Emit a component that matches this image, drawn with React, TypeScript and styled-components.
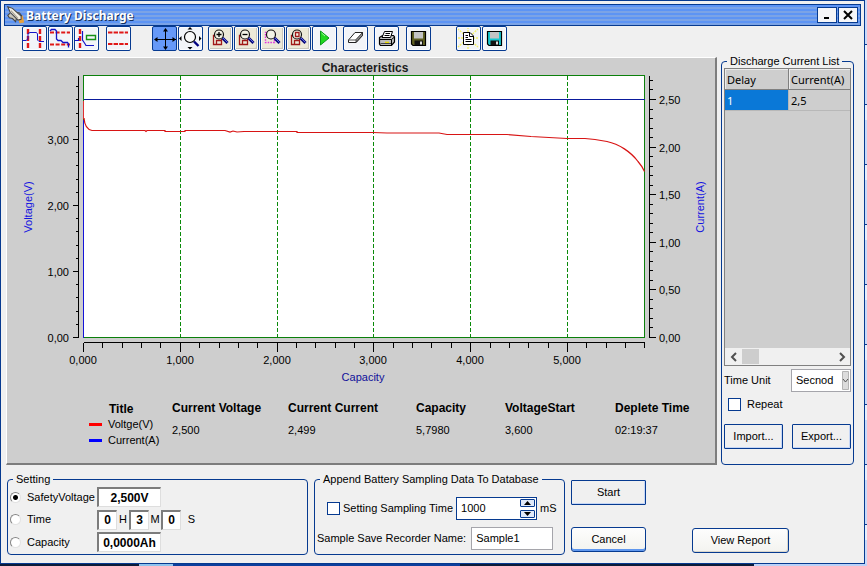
import React, { useState } from "react";
import styled, { createGlobalStyle, css } from "styled-components";

const NAVY = "#063a90";
const FACE = "#f0f0f0";
const PANEL = "#cecece";

const GlobalStyle = createGlobalStyle`
  * { box-sizing: border-box; }
  html, body { margin: 0; padding: 0; }
  body, button, input, select {
    font-family: "Liberation Sans", Arial, sans-serif;
    font-size: 11px;
    line-height: 13px;
    color: #000;
  }
`;

const Desktop = styled.div`
  display: flex;
  min-height: 100vh;
  padding: 0 2px 2px 0;
  background:
    linear-gradient(90deg, #0b1c3a 0 16%, #8fc4ee 16% 20%, #0c3f9c 20% 53%, #0b1c3a 53% 87%, #bcd2f8 87%) bottom / 100% 2px no-repeat,
    repeating-linear-gradient(180deg, #c9dafa 0 44px, #0a3a8c 44px 45px, #e6effd 45px 60px);
`;

const Window = styled.main`
  flex: 1;
  min-width: 0;
  display: flex;
  flex-direction: column;
  padding: 3px 3px 0;
  border: 1px solid ${NAVY};
  background: ${FACE};
`;

const TitleBar = styled.header`
  display: flex;
  align-items: center;
  height: 22px;
  padding: 0 2px;
  border: 1px solid ${NAVY};
  background: repeating-linear-gradient(180deg, #5d94f4 0 2px, #7ba3e6 2px 4px);
`;

const Title = styled.h1`
  flex: 1;
  margin: 0 0 0 1px;
  padding-top: 1px;
  font: bold 12px/18px "Noto Sans", sans-serif;
  color: #fff;
  text-shadow: 1px 1px 0 #12305f;
`;

const CaptionButton = styled.button`
  display: grid;
  place-items: center;
  width: 20px;
  height: 16px;
  margin-left: 1px;
  padding: 0;
  border: 1px solid ${NAVY};
  background: #f6f6f8;
`;

const Toolbar = styled.div`
  display: flex;
  height: 29px;
  padding-left: 18px;
`;

const ToolGroup = styled.div<{ $gap?: number }>`
  display: flex;
  gap: 1px;
  margin-left: ${(p) => p.$gap ?? 0}px;
`;

const ToolButton = styled.button<{ $active?: boolean; $raised?: boolean }>`
  width: 25px;
  height: 25px;
  padding: 0;
  border: 1px solid ${NAVY};
  border-radius: 2px;
  background: ${(p) => (p.$active ? "#6699f8" : p.$raised ? "#ece9d8" : "#f2f4f8")};
  box-shadow: inset 0 0 0 1px ${(p) => (p.$active ? "#6699f8" : "#fbfcff")}
    ${(p) => p.$raised && css`, inset -2px -2px 0 #c9c6bb`};
  svg { display: block; }
`;

const MainRow = styled.div`
  display: flex;
  gap: 4px;
  padding: 0 7px 0 2px;
`;

const ChartPanel = styled.section`
  flex: 1;
  min-width: 0;
  margin-top: 2px;
  border: 1px solid #fff;
  border-right: 2px solid #7d7d7d;
  border-bottom: 2px solid #7d7d7d;
  background: ${PANEL};
`;

const Chart = styled.svg`
  display: block;
  width: 100%;
  height: auto;
  font-family: "Liberation Sans", Arial, sans-serif;
  font-size: 11px;
`;

const Readings = styled.div`
  display: grid;
  grid-template-columns: 83fr 116fr 128fr 89fr 110fr 100fr;
  height: 73px;
  padding: 11px 0 0 82px;
`;

const ReadingTitle = styled.div`
  font-size: 12px;
  font-weight: bold;
  line-height: 14px;
  white-space: nowrap;
`;

const ReadingValue = styled.div`
  margin-top: 9px;
`;

const LegendList = styled.div`
  display: flex;
  flex-direction: column;
  ${ReadingTitle} { padding: 1px 0 0 20px; }
`;

const LegendItem = styled.div<{ $color: string }>`
  display: flex;
  align-items: center;
  gap: 6px;
  height: 16px;
  white-space: nowrap;
  &::before {
    content: "";
    width: 13px;
    height: 3px;
    background: ${(p) => p.$color};
  }
`;

const Group = styled.fieldset<{ $width?: number }>`
  flex: ${(p) => (p.$width ? `0 0 ${p.$width}px` : "1")};
  min-width: 0;
  margin: 0;
  padding: 0;
  border: 1px solid ${NAVY};
  border-radius: 4px;
`;

const GroupTitle = styled.legend`
  margin-left: 5px;
  padding: 0 3px;
  white-space: nowrap;
`;

const ListBox = styled.div`
  display: flex;
  flex-direction: column;
  height: 298px;
  margin: 0 2px;
  border: 1px solid #808080;
  background: ${PANEL};
`;

const ListTable = styled.table`
  width: 100%;
  border-collapse: separate;
  border-spacing: 0;
  table-layout: fixed;
  font: 11px/19px "Noto Sans", sans-serif;
  th, td {
    height: 21px;
    padding: 0 2px;
    text-align: left;
    font-weight: normal;
    border-right: 1px solid #808080;
    border-bottom: 1px solid #808080;
  }
  th { box-shadow: inset 1px 1px 0 #ececec; }
  th:first-child { width: 64px; }
  th:last-child, td:last-child { border-right: 0; }
  td { border-color: #b8b8b8; }
`;

const SelectedCell = styled.td`
  background: #0a78d7;
  color: #fff;
`;

const ScrollBar = styled.div`
  display: flex;
  align-items: center;
  height: 17px;
  margin-top: auto;
  background: ${FACE};
`;

const ScrollButton = styled.button`
  display: grid;
  place-items: center;
  width: 17px;
  height: 17px;
  padding: 0;
  border: 0;
  background: transparent;
  &:last-child { margin-left: auto; }
`;

const ScrollThumb = styled.div`
  width: 17px;
  height: 15px;
  background: #cdcdcd;
`;

const Row = styled.div<{ $height: number; $pad?: number; $gap?: number }>`
  display: flex;
  align-items: center;
  gap: ${(p) => p.$gap ?? 0}px;
  height: ${(p) => p.$height}px;
  padding: 0 ${(p) => p.$pad ?? 2}px;
  white-space: nowrap;
`;

const Spread = styled(Row)`
  justify-content: space-between;
`;

const SelectBox = styled.div`
  position: relative;
  width: 60px;
  svg {
    position: absolute;
    top: 2px;
    right: 2px;
    pointer-events: none;
  }
`;

const Select = styled.select`
  width: 100%;
  height: 23px;
  padding: 0 0 0 4px;
  appearance: none;
  border: 1px solid #a5a5ab;
  border-radius: 0;
  background: #fff;
`;

const CheckBox = styled.input.attrs({ type: "checkbox" })`
  appearance: none;
  flex: none;
  width: 13px;
  height: 13px;
  margin: 0;
  border: 1px solid ${NAVY};
  background: #fff;
  &:checked { background: ${NAVY}; box-shadow: inset 0 0 0 2px #fff; }
`;

const Radio = styled.input.attrs({ type: "radio" })`
  appearance: none;
  flex: none;
  width: 11px;
  height: 11px;
  margin: 0;
  border: 1px solid;
  border-color: #858585 #e2e2e2 #e2e2e2 #858585;
  border-radius: 50%;
  background: #fff;
  &:checked { background: radial-gradient(circle, #000 2px, #fff 3px); }
`;

const RadioLabel = styled.label`
  display: flex;
  align-items: center;
  gap: 6px;
  width: 87px;
`;

const SunkenInput = styled.input<{ $width: number }>`
  width: ${(p) => p.$width}px;
  height: 20px;
  padding: 0;
  border: 1px solid;
  border-width: 2px 1px 1px 2px;
  border-color: #7c7c7c #dedede #dedede #7c7c7c;
  background: #fff;
  font-size: 12px;
  font-weight: bold;
  text-align: center;
`;

const Unit = styled.span`
  width: 12px;
  text-align: center;
  &:last-child { width: 14px; text-align: right; }
`;

const PushButton = styled.button<{ $width: number; $look?: "flat" | "soft" | "default" }>`
  width: ${(p) => p.$width}px;
  height: 25px;
  padding: 0;
  border: 1px solid ${NAVY};
  border-radius: ${(p) => (p.$look === "flat" ? 1 : 3)}px;
  background: ${(p) => (p.$look === "flat" ? FACE : "linear-gradient(#fdfdfd, #f3f3ef)")};
  box-shadow: ${(p) =>
    p.$look === "default"
      ? "inset 0 -2px 0 #5f97ee"
      : p.$look === "soft"
        ? "inset -1px -1px 0 #d9d6cc"
        : "inset -1px -1px 0 #c5d6f6"};
`;

const BottomRow = styled.div`
  display: flex;
  align-items: flex-start;
  gap: 6px;
  padding: 8px 72px 0 3px;
  ${Group} { height: 82px; }
`;

const ButtonColumn = styled.div`
  display: flex;
  flex-direction: column;
  justify-content: space-between;
  height: 79px;
  padding-top: 7px;
`;

const ReportSlot = styled.div`
  display: flex;
  align-items: flex-end;
  height: 80px;
  margin-left: 40px;
`;

const Spinner = styled.div`
  display: flex;
  align-items: center;
  width: 81px;
  height: 23px;
  padding-right: 1px;
  border: 1px solid ${NAVY};
  background: #fff;
`;

const SpinnerInput = styled.input`
  flex: 1;
  min-width: 0;
  height: 19px;
  padding: 0 0 0 4px;
  border: 0;
  background: transparent;
`;

const SpinButtons = styled.div`
  display: flex;
  flex-direction: column;
  gap: 3px;
`;

const SpinButton = styled.button`
  display: grid;
  place-items: center;
  width: 15px;
  height: 8px;
  padding: 0;
  border: 1px solid ${NAVY};
  border-radius: 1px;
  background: #dfe9fa;
`;

const TextInput = styled.input`
  width: 82px;
  height: 23px;
  padding: 0 0 0 4px;
  border: 1px solid #a5a5ab;
  background: #fff;
`;

/* ---------- icons ---------- */

const Icon = ({ children, size = 23 }: { children: React.ReactNode; size?: number }) => (
  <svg width={size} height={size} viewBox="0 0 23 23" fill="none" aria-hidden="true">
    {children}
  </svg>
);

const RED = "#e01818";
const BLUE = "#1414c8";

const PulseIcon = () => (
  <Icon>
    <path d="M5 2V22M17 2V22" stroke={RED} strokeWidth="2.4" strokeDasharray="5 2" />
    <path d="M0 13.5H3L5 12V6.5L7 5.5H13.5L14.5 7V13L16 14.5H21" stroke={BLUE} />
  </Icon>
);
const DecayIcon = () => (
  <Icon>
    <path d="M1 5.5H21M1 17.5H21" stroke={RED} strokeWidth="2" strokeDasharray="4 1.6" />
    <path d="M1 4L2.5 2.5H6L7.5 4V12L9 13.5H12L14 15.5H18.5L19.5 17V20.5" stroke={BLUE} strokeWidth="1.3" />
  </Icon>
);
const EdgeIcon = () => (
  <Icon>
    <path d="M5 2V22" stroke={RED} strokeWidth="2.4" strokeDasharray="5 2" />
    <path d="M0 13.5H3.5V11M7.5 4V13L9.5 16L11 18.5H19" stroke={BLUE} strokeWidth="1.2" />
    <path d="M11.5 8.5H20.5V12.5H11.5Z" stroke="#159015" strokeWidth="1.4" />
  </Icon>
);
const BandIcon = () => (
  <Icon>
    <path d="M1 5.5H21M1 17H21" stroke={RED} strokeWidth="1.8" strokeDasharray="4.4 1.2" />
  </Icon>
);
const MoveIcon = () => (
  <Icon>
    <path d="M12.5 2V22M2 12.5H23" stroke="#000" />
    <path d="M12.5 1L15 4.500H10ZM12.500 23L15 19.500H10ZM1 12.500L4.500 10V15ZM23 12.500L19.500 10V15Z" fill="#000" />
  </Icon>
);
const FitIcon = () => (
  <Icon>
    <circle cx="11" cy="10" r="5.5" stroke="#000" strokeWidth="1.2" fill="#f8f8f8" />
    <path d="M15 14.5L19.5 19" stroke="#000080" strokeWidth="2.4" />
    <path d="M11 0L13.500 2.500H8.500ZM11 22.500L13.500 20H8.500ZM0 11.500L2.500 9V14ZM22.500 11.500L20 9V14Z" fill="#000" />
  </Icon>
);
const Lens = ({ children }: { children?: React.ReactNode }) => (
  <>
    <circle cx="10" cy="7.5" r="4.5" fill="#f3f3e6" stroke="#111" strokeWidth="1.2" />
    {children}
    <path d="M13.5 11L18.5 16" stroke="#0a0a78" strokeWidth="3" />
    <path d="M14 11L18.5 15.5" stroke="#5c6ce8" />
  </>
);
const RedSheet = () => (
  <path d="M6 8.5H4.5V17.5H12.5V12M7.5 17V13.5H12.5" stroke="#a01818" strokeWidth="1.3" />
);
const ZoomInIcon = () => (
  <Icon><RedSheet /><Lens><path d="M7.5 7.5H12.5M10 5V10" stroke="#000" strokeWidth="1.3" /></Lens></Icon>
);
const ZoomOutIcon = () => (
  <Icon><RedSheet /><Lens><path d="M7.5 7.5H12.5" stroke="#000" strokeWidth="1.3" /></Lens></Icon>
);
const ZoomAreaIcon = () => (
  <Icon>
    <path d="M4.5 5.5H13.5V15.5H4.5Z" stroke="#e030e0" strokeWidth="1.4" strokeDasharray="1.5 1.2" />
    <Lens />
  </Icon>
);
const ZoomPageIcon = () => (
  <Icon><RedSheet /><Lens><path d="M8.5 5.5H12V9.5H8.5Z" stroke="#a01818" strokeWidth="1.3" /></Lens></Icon>
);
const PlayIcon = () => (
  <Icon>
    <path d="M7.5 4V18L16 11Z" fill="#20d820" stroke="#0a9a1a" />
    <path d="M8.5 6L12 9" stroke="#9dff9d" />
  </Icon>
);
const EraserIcon = () => (
  <Icon>
    <path d="M4.5 13L11 5.5H18.5V8.5L12 15.5H4.5Z" fill="#fff" stroke="#222" />
    <path d="M12 12.5L18.5 5.5V8.5L12 15.5Z" fill="#8a8a8a" stroke="#222" strokeWidth=".8" />
    <path d="M4.5 13H12" stroke="#555" />
  </Icon>
);
const PrinterIcon = () => (
  <Icon>
    <path d="M4.5 10.5L7.5 8.5H18.5L19.5 10V15L16.5 18.5H5.5L4.5 17Z" fill="#bdbdbd" stroke="#000" strokeWidth="1.2" />
    <path d="M7 10.5L9.5 4.5H17.5L15.5 10.5Z" fill="#fff" stroke="#000" />
    <path d="M10.5 6.5H15M9.5 8.5H14.5" stroke="#000" />
    <path d="M4.5 12.5H16.5L19.5 10M16.5 12.5V18" stroke="#000" />
    <path d="M10 15.5H14" stroke="#e8d800" strokeWidth="1.6" />
    <path d="M5.5 16.5H16" stroke="#444" />
  </Icon>
);
const FloppyIcon = ({ color }: { color: string }) => (
  <Icon>
    <path d="M4.5 4.5H18.5V18.5H6L4.5 17Z" fill={color} stroke="#000" strokeWidth="1.2" />
    <path d="M7 5H16V11.5H7Z" fill="#c4c4c4" />
    <path d="M7.5 13.5H16V18H7.5Z" fill="#111" />
    <path d="M13 14.5H15V17.5H13Z" fill="#ddd" />
  </Icon>
);
const ReportIcon = () => (
  <Icon>
    <path
      d="M11 11L1 2M11 11L21 2M11 11V1M11 11L1 20M11 11L21 20M11 11V22M1 11H22"
      stroke="#f4f06a"
      strokeWidth="1.4"
      strokeDasharray="2 1"
    />
    <path d="M6.5 5.5H13L16.5 9V17.5H6.5Z" fill="#fff" stroke="#000" />
    <path d="M12.5 5.5V9.5H16.5M8.5 8.5H11M8.5 10.5H11M8.5 12.5H14.5M8.5 14.5H14.5" stroke="#000" />
  </Icon>
);
const RocketIcon = () => (
  <Icon size={18}>
    <path d="M14 16L20 12L22 21L16 22Z" fill="#e9a13b" />
    <path d="M4 9L1 12L3 15L7 16L11 20L12 16M12 8L16 9L19 13" fill="#c9c6b8" stroke="#444" strokeWidth="1.3" />
    <path d="M1 1L7 3L18 13V17L14 18L4 8Z" fill="#f1eee2" stroke="#444" strokeWidth="1.3" />
    <path d="M5 6L14 16" stroke="#a9a596" strokeWidth="1.6" />
  </Icon>
);

/* ---------- chart ---------- */

const LEFT = 76;
const RIGHT = 637;
const TOP = 17;
const BOTTOM = 279;
const X_UNIT = 96.8;
const V_UNIT = 66;
const A_UNIT = 95.2;

type Tick = { at: number; label?: string };

const makeTicks = (count: number, every: number, step: number, unit: number, digits: number): Tick[] =>
  Array.from({ length: count }, (_, i) => ({
    at: Math.round(i * step * unit),
    label: i % every === 0 ? (i * step).toFixed(digits).replace(".", ",") : undefined,
  }));

const voltTicks = makeTicks(20, 5, 0.2, V_UNIT, 2);
const ampTicks = makeTicks(28, 5, 0.1, A_UNIT, 2);
const capTicks = [...makeTicks(29, 5, 0.2, X_UNIT, 3), { at: RIGHT - LEFT } as Tick];

const DischargeChart = () => (
  <Chart viewBox="0 0 708 332" role="img" aria-label="Discharge characteristics">
    <text x="358" y="14" textAnchor="middle" fontSize="12" fontWeight="bold" fill="#1c1c1c">
      Characteristics
    </text>
    <rect x={LEFT} y={TOP} width={RIGHT - LEFT + 1} height={BOTTOM - TOP} fill="#fff" />
    <g transform="translate(.5 .5)" fill="none" stroke="#000" shapeRendering="crispEdges">
      {[1, 2, 3, 4, 5].map((n) => {
        const x = LEFT + Math.round(n * X_UNIT);
        return <path key={n} d={`M${x} ${TOP}V${BOTTOM}`} stroke="#0a8a0a" strokeDasharray="4 2" />;
      })}
      <path d={`M${LEFT} ${TOP}H${RIGHT}V${BOTTOM}H${LEFT}Z`} stroke="#0b800b" />
      <path d={`M${LEFT} 41H${RIGHT}`} stroke="#0a1a9c" />
      <path d={`M${LEFT} 61V${BOTTOM}`} stroke="#1414d8" />
      <path d={`M${LEFT} 42V60`} stroke="#e03030" />
      <path d={`M71 ${TOP}V${BOTTOM}`} />
      {voltTicks.map((t) => (
        <path key={t.at} d={`M${t.label ? 65 : 68} ${BOTTOM - t.at}H71`} />
      ))}
      <path d={`M642 ${TOP}V${BOTTOM}`} />
      {ampTicks.map((t) => (
        <path key={t.at} d={`M642 ${BOTTOM - t.at}H${t.label ? 648 : 645}`} />
      ))}
      <path d={`M${LEFT} 284H${RIGHT}`} />
      {capTicks.map((t) => (
        <path key={t.at} d={`M${LEFT + t.at} 284V${t.label ? 293 : 289}`} />
      ))}
    </g>
    <path
      d="M77 60C77.500 67 80 71.500 85 72.500H138L139 73.500L140 72.500H158V73.500H178V72.500H218L223 74L226 73L230 74L237 73.500H290V74.500H366L380 75H432L440 76.500H500L524 78.500L560 80.500H578L588 81.500L600 83.500C612 86 624 94 631 103.500Q635 108 637.500 113.500"
      fill="none"
      stroke="#d81414"
      strokeWidth="1.2"
    />
    {voltTicks.filter((t) => t.label).map((t) => (
      <text key={t.at} x="62" y={BOTTOM - t.at + 5} textAnchor="end">{t.label}</text>
    ))}
    {ampTicks.filter((t) => t.label).map((t) => (
      <text key={t.at} x="652" y={BOTTOM - t.at + 5}>{t.label}</text>
    ))}
    {capTicks.filter((t) => t.label).map((t) => (
      <text key={t.at} x={LEFT + t.at} y="306" textAnchor="middle">{t.label}</text>
    ))}
    <text x="356" y="323" textAnchor="middle" fill="#10109a">Capacity</text>
    <text transform="translate(25 149) rotate(-90)" textAnchor="middle" fill="#1414e0">Voltage(V)</text>
    <text transform="translate(697 149) rotate(-90)" textAnchor="middle" fill="#1414e0">Current(A)</text>
  </Chart>
);

const readings = [
  ["Current Voltage", "2,500"],
  ["Current Current", "2,499"],
  ["Capacity", "5,7980"],
  ["VoltageStart", "3,600"],
  ["Deplete Time", "02:19:37"],
];

const modes = ["SafetyVoltage", "Time", "Capacity"];

export default function App() {
  const [mode, setMode] = useState("SafetyVoltage");
  const modeRadio = (name: string) => (
    <RadioLabel>
      <Radio name="mode" checked={mode === name} onChange={() => setMode(name)} />
      {name}
    </RadioLabel>
  );

  return (
    <>
      <GlobalStyle />
      <Desktop>
        <Window>
          <TitleBar>
            <RocketIcon />
            <Title>Battery Discharge</Title>
            <CaptionButton aria-label="Minimize">
              <svg width="10" height="10"><path d="M2 7H7V9H2Z" /></svg>
            </CaptionButton>
            <CaptionButton aria-label="Close">
              <svg width="10" height="10"><path d="M1 1L9 9M9 1L1 9" stroke="#000" strokeWidth="2" /></svg>
            </CaptionButton>
          </TitleBar>

          <Toolbar role="toolbar" aria-label="Chart tools">
            <ToolGroup>
              <ToolButton aria-label="Pulse"><PulseIcon /></ToolButton>
              <ToolButton aria-label="Decay"><DecayIcon /></ToolButton>
              <ToolButton aria-label="Edge"><EdgeIcon /></ToolButton>
            </ToolGroup>
            <ToolGroup $gap={7}>
              <ToolButton aria-label="Limits"><BandIcon /></ToolButton>
            </ToolGroup>
            <ToolGroup $gap={21}>
              <ToolButton $active aria-label="Pan"><MoveIcon /></ToolButton>
              <ToolButton aria-label="Fit"><FitIcon /></ToolButton>
            </ToolGroup>
            <ToolGroup $gap={5}>
              <ToolButton $raised aria-label="Zoom in"><ZoomInIcon /></ToolButton>
              <ToolButton $raised aria-label="Zoom out"><ZoomOutIcon /></ToolButton>
              <ToolButton $raised aria-label="Zoom area"><ZoomAreaIcon /></ToolButton>
              <ToolButton $raised aria-label="Zoom page"><ZoomPageIcon /></ToolButton>
              <ToolButton aria-label="Run"><PlayIcon /></ToolButton>
            </ToolGroup>
            <ToolGroup $gap={6}>
              <ToolButton aria-label="Clear"><EraserIcon /></ToolButton>
            </ToolGroup>
            <ToolGroup $gap={6}>
              <ToolButton aria-label="Print"><PrinterIcon /></ToolButton>
            </ToolGroup>
            <ToolGroup $gap={7}>
              <ToolButton aria-label="Save"><FloppyIcon color="#5f5f22" /></ToolButton>
            </ToolGroup>
            <ToolGroup $gap={25}>
              <ToolButton aria-label="Report"><ReportIcon /></ToolButton>
              <ToolButton aria-label="Save report"><FloppyIcon color="#18c8d0" /></ToolButton>
            </ToolGroup>
          </Toolbar>

          <MainRow>
            <ChartPanel>
              <DischargeChart />
              <Readings>
                <LegendList>
                  <ReadingTitle>Title</ReadingTitle>
                  <LegendItem $color="#f00">Voltge(V)</LegendItem>
                  <LegendItem $color="#00f">Current(A)</LegendItem>
                </LegendList>
                {readings.map(([title, value]) => (
                  <div key={title}>
                    <ReadingTitle>{title}</ReadingTitle>
                    <ReadingValue>{value}</ReadingValue>
                  </div>
                ))}
              </Readings>
            </ChartPanel>

            <Group $width={133}>
              <GroupTitle>Discharge Current List</GroupTitle>
              <ListBox>
                <ListTable>
                  <thead>
                    <tr><th scope="col">Delay</th><th scope="col">Current(A)</th></tr>
                  </thead>
                  <tbody>
                    <tr><SelectedCell>1</SelectedCell><td>2,5</td></tr>
                  </tbody>
                </ListTable>
                <ScrollBar>
                  <ScrollButton aria-label="Scroll left">
                    <svg width="8" height="10"><path d="M6 1L2 5L6 9" fill="none" stroke="#505050" strokeWidth="2" /></svg>
                  </ScrollButton>
                  <ScrollThumb />
                  <ScrollButton aria-label="Scroll right">
                    <svg width="8" height="10"><path d="M2 1L6 5L2 9" fill="none" stroke="#505050" strokeWidth="2" /></svg>
                  </ScrollButton>
                </ScrollBar>
              </ListBox>
              <Spread $height={29}>
                <label htmlFor="unit">Time Unit</label>
                <SelectBox>
                  <Select id="unit" defaultValue="Secnod"><option>Secnod</option></Select>
                  <svg width="7" height="19">
                    <path d="M.5.5H6.5V18.5H.5Z" fill="#dcdcdc" stroke="#b4b4b4" />
                    <path d="M1 8L3.500 11L6 8" fill="none" stroke="#555" />
                  </svg>
                </SelectBox>
              </Spread>
              <Row $height={19} $pad={6} $gap={6}>
                <CheckBox id="repeat" />
                <label htmlFor="repeat">Repeat</label>
              </Row>
              <Spread $height={45}>
                <PushButton $width={59} $look="flat">Import...</PushButton>
                <PushButton $width={59} $look="flat">Export...</PushButton>
              </Spread>
            </Group>
          </MainRow>

          <BottomRow>
            <Group>
              <GroupTitle>Setting</GroupTitle>
              <Row $height={22}>
                {modeRadio(modes[0])}
                <SunkenInput $width={64} aria-label="Safety voltage" defaultValue="2,500V" />
              </Row>
              <Row $height={23}>
                {modeRadio(modes[1])}
                <SunkenInput $width={20} aria-label="Hours" defaultValue="0" />
                <Unit>H</Unit>
                <SunkenInput $width={20} aria-label="Minutes" defaultValue="3" />
                <Unit>M</Unit>
                <SunkenInput $width={20} aria-label="Seconds" defaultValue="0" />
                <Unit>S</Unit>
              </Row>
              <Row $height={22}>
                {modeRadio(modes[2])}
                <SunkenInput $width={64} aria-label="Capacity limit" defaultValue="0,0000Ah" />
              </Row>
            </Group>

            <Group $width={251}>
              <GroupTitle>Append Battery Sampling Data To Database</GroupTitle>
              <Row $height={44} $pad={12} $gap={3}>
                <CheckBox id="sampling" />
                <label htmlFor="sampling">Setting Sampling Time</label>
                <Spinner>
                  <SpinnerInput aria-label="Sampling time" defaultValue="1000" />
                  <SpinButtons>
                    <SpinButton aria-label="Increase"><svg width="7" height="4"><path d="M0 4L3.500 0L7 4Z" /></svg></SpinButton>
                    <SpinButton aria-label="Decrease"><svg width="7" height="4"><path d="M0 0L3.500 4L7 0Z" /></svg></SpinButton>
                  </SpinButtons>
                </Spinner>
                mS
              </Row>
              <Row $height={16} $gap={5}>
                <label htmlFor="recorder">Sample Save Recorder Name:</label>
                <TextInput id="recorder" defaultValue="Sample1" />
              </Row>
            </Group>

            <ButtonColumn>
              <PushButton $width={75} $look="flat">Start</PushButton>
              <PushButton $width={75} $look="default">Cancel</PushButton>
            </ButtonColumn>
            <ReportSlot>
              <PushButton $width={97} $look="soft">View Report</PushButton>
            </ReportSlot>
          </BottomRow>
        </Window>
      </Desktop>
    </>
  );
}
